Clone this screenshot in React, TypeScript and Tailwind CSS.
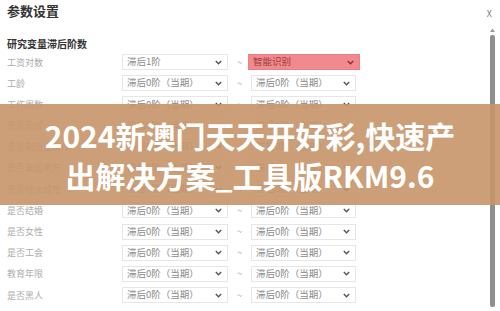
import React from "react";

const rows = [
  { label: "工资对数", a: "滞后1阶", b: "智能识别", pink: true },
  { label: "工龄" },
  { label: "工作周数" },
  { label: "是否蓝领" },
  { label: "是否制造业工作" },
  { label: "是否美国南方" },
  { label: "是否住大城市" },
  { label: "是否结婚" },
  { label: "是否女性" },
  { label: "是否工会" },
  { label: "教育年限" },
  { label: "是否黑人" },
];

function Chevron({ color = "#555" }: { color?: string }) {
  return (
    <svg width="7" height="5" viewBox="0 0 7 5" className="shrink-0">
      <path d="M0.8 1 L3.5 3.8 L6.2 1" fill="none" stroke={color} strokeWidth="1.4" />
    </svg>
  );
}

function Select({ text, pink, w }: { text: string; pink?: boolean; w: string }) {
  return (
    <div
      className={
        "h-[16px] flex items-center justify-between pl-[4px] pr-[5px] text-[9.5px] leading-none border " +
        w +
        " " +
        (pink
          ? "bg-[#f08a8e] border-[#ee7e83] text-[#9c3a3e]"
          : "bg-white border-[#e6e6e6] text-[#8a8a8a]")
      }
    >
      <span>{text}</span>
      <Chevron color={pink ? "#8a3034" : "#555"} />
    </div>
  );
}

export default function App() {
  return (
    <div
      className="relative w-[500px] h-[311px] bg-white overflow-hidden"
      style={{ fontFamily: '"Noto Sans CJK SC", "Noto Sans", sans-serif' }}
    >
      <div className="flex items-start justify-between pl-[7px] pr-[7px] pt-[2px]">
        <div className="text-[13px] font-bold text-[#333] leading-[18px]">参数设置</div>
        <div className="text-[9px] text-[#777] leading-none mt-[7px] mr-[1px]">X</div>
      </div>

      <div className="flex">
        <div className="flex-1 pl-[7px]">
          <div className="text-[10px] font-bold text-[#333] leading-[14px] mt-[17px]">研究变量滞后阶数</div>
          <div className="flex flex-col gap-[5.2px] mt-[3px]">
            {rows.map((r, i) => (
              <div key={i} className="flex items-center h-[16px]">
                <div className="w-[115px] text-[9px] text-[#adadad] leading-none whitespace-nowrap">{r.label}</div>
                <Select text={r.a ?? "滞后0阶（当期）"} w="w-[106px]" />
                <div className="w-[23px] text-center text-[9px] text-[#999] leading-none">~</div>
                <Select text={r.b ?? "滞后0阶（当期）"} pink={r.pink} w={r.pink ? "w-[112px] -ml-[3px]" : "w-[105px]"} />
              </div>
            ))}
          </div>
        </div>
        <div className="w-[12px] flex flex-col items-center pt-[8px] pr-[3px]">
          <svg width="5" height="4" viewBox="0 0 5 4">
            <path d="M0 4 L2.5 0.5 L5 4 Z" fill="#999" />
          </svg>
          <div className="mt-[3px] w-[5px] h-[272px] rounded-[2px] bg-[#8f8f8f]" />
        </div>
      </div>

      <div className="absolute left-0 right-0 top-[104px] h-[101px] bg-[#c6956a]/90 flex flex-col items-center justify-center text-white font-bold text-[30px] leading-[40px]">
        <span>2024新澳门天天开好彩,快速产</span>
        <span>出解决方案_工具版RKM9.6</span>
      </div>
    </div>
  );
}
